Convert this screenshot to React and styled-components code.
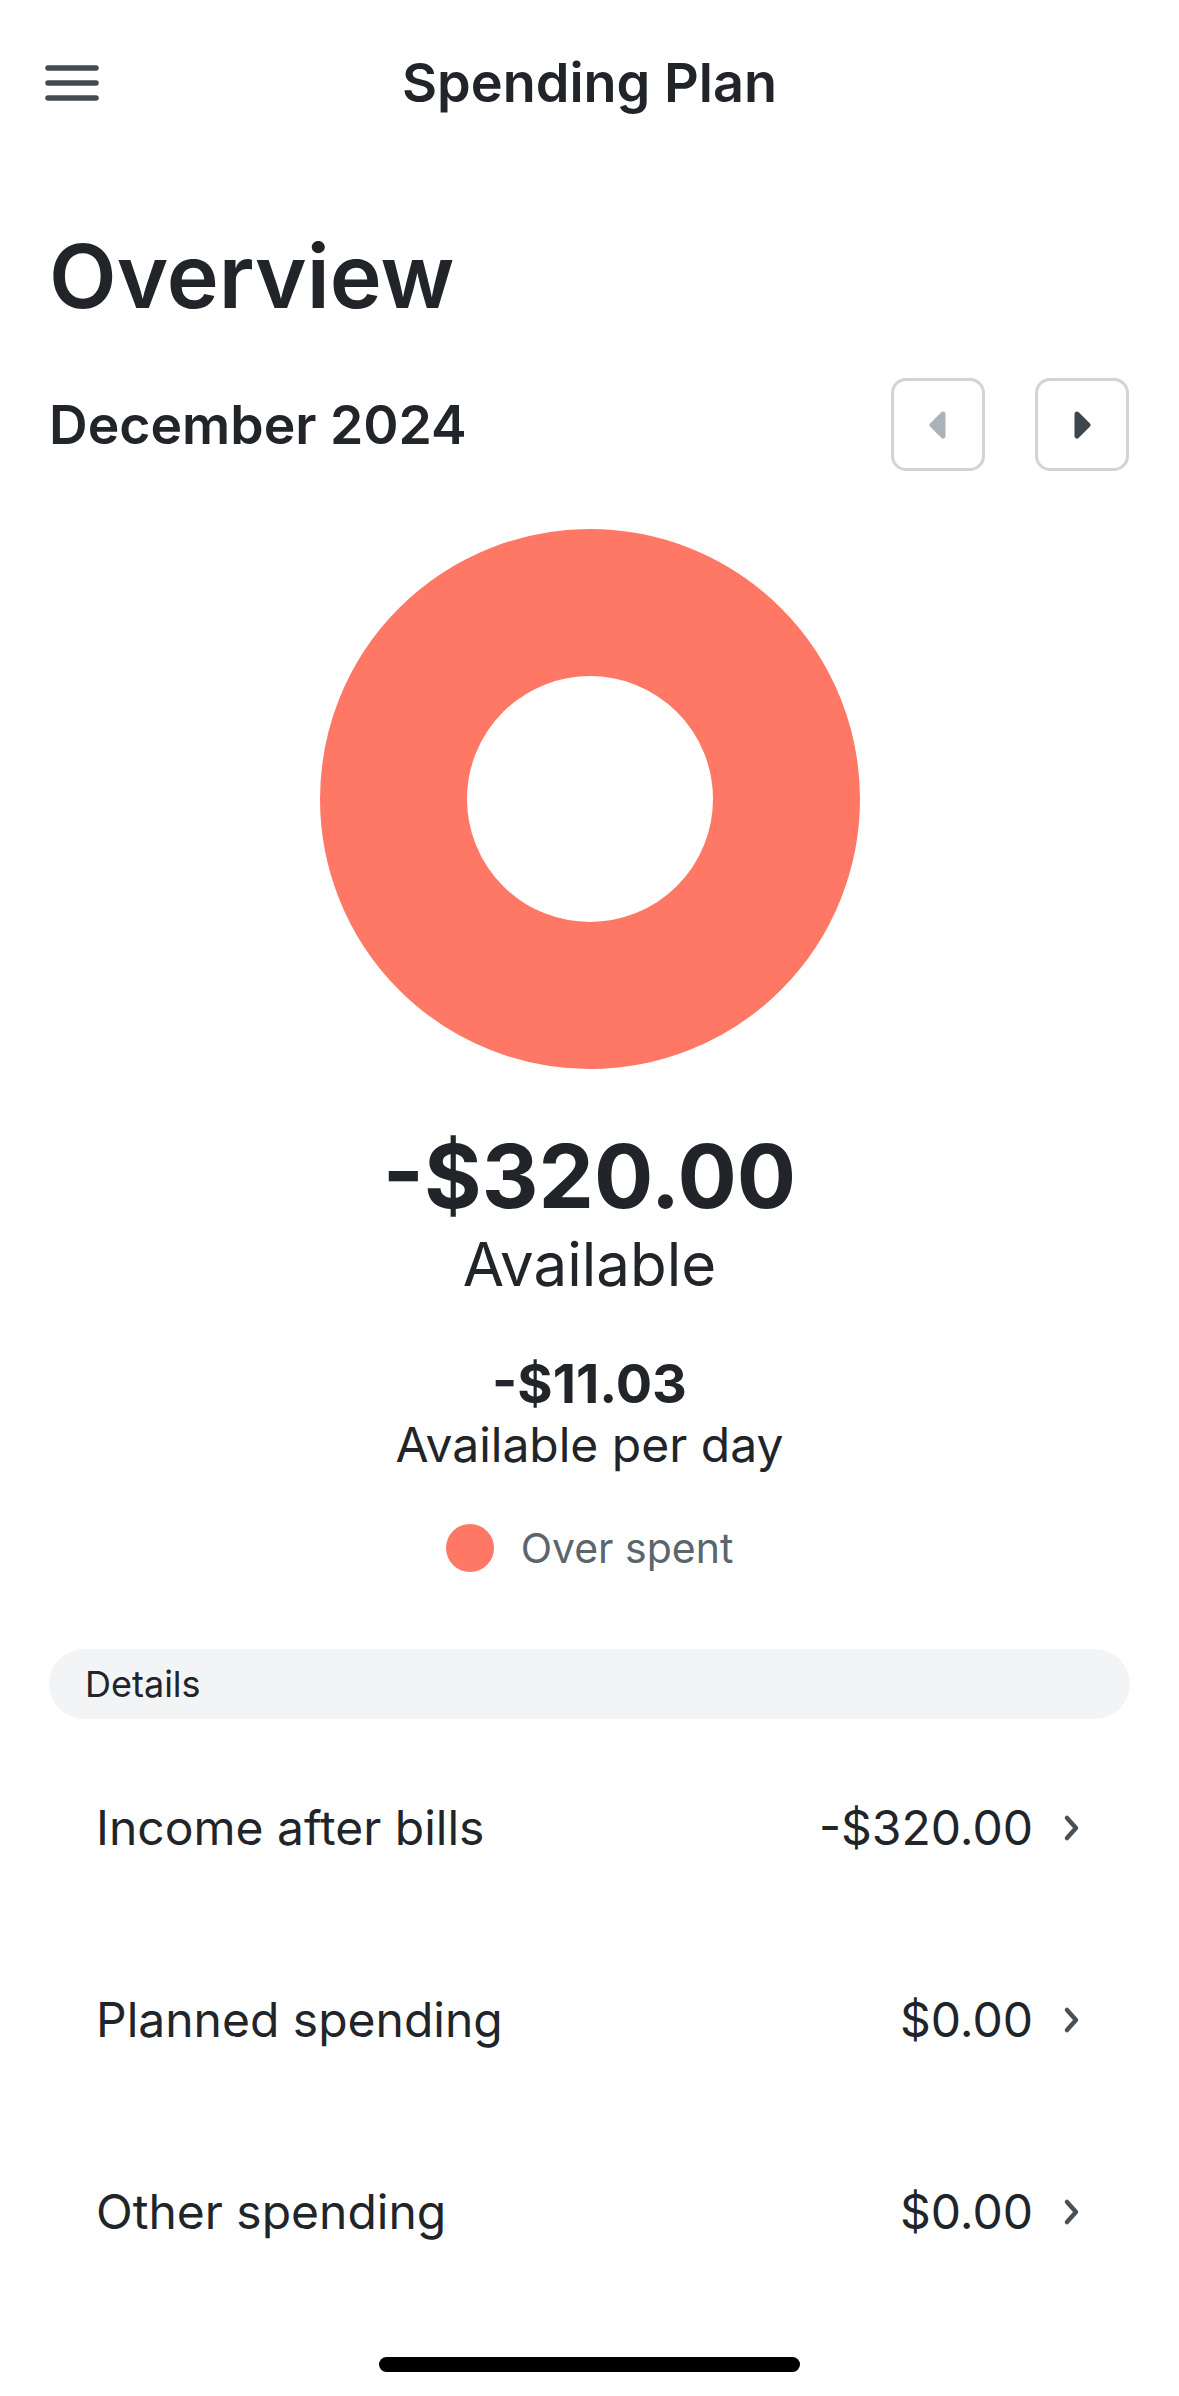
import React from "react";
import styled, { createGlobalStyle } from "styled-components";

const GlobalStyle = createGlobalStyle`
  html, body { margin: 0; padding: 0; background: #ffffff; }
  body { font-family: Inter, "Noto Sans", "Liberation Sans", sans-serif; color: #212529; }
  * { box-sizing: border-box; }
`;

const Page = styled.div`
  width: 1179px;
  min-height: 2396px;
  display: flex;
  flex-direction: column;
  background: #ffffff;
`;

const Header = styled.header`
  height: 165px;
  display: grid;
  grid-template-columns: 1fr auto 1fr;
  align-items: center;
  padding: 0 45px;
`;

const MenuButton = styled.button`
  justify-self: start;
  display: flex;
  align-items: center;
  justify-content: center;
  padding: 0;
  border: 0;
  background: none;
  width: 54px;
  height: 36px;
`;

const Title = styled.h1`
  margin: 0;
  font-size: 54px;
  font-weight: 600;
  line-height: 66px;
  color: #212529;
`;

const Content = styled.main`
  display: flex;
  flex-direction: column;
  padding: 0 49px;
`;

const PageHeading = styled.h2`
  margin: 58px 0 0;
  font-size: 88px;
  font-weight: 600;
  line-height: 106px;
  color: #212529;
`;

const MonthRow = styled.div`
  margin-top: 49px;
  height: 93px;
  display: flex;
  align-items: center;
  justify-content: space-between;
`;

const Month = styled.div`
  font-size: 53.5px;
  font-weight: 600;
  line-height: 62px;
  color: #212529;
`;

const NavGroup = styled.div`
  display: flex;
  gap: 50px;
  padding-right: 1px;
`;

const NavButton = styled.button`
  width: 94px;
  height: 93px;
  border: 3px solid #cfd4d7;
  border-radius: 15px;
  background: #ffffff;
  display: flex;
  align-items: center;
  justify-content: center;
  padding: 0;
`;

const ChartWrap = styled.div`
  margin-top: 57px;
  display: flex;
  justify-content: center;
`;

const Summary = styled.div`
  display: flex;
  flex-direction: column;
  align-items: center;
  text-align: center;
`;

const BigAmount = styled.div`
  margin-top: 54px;
  font-size: 88px;
  font-weight: 700;
  line-height: 104px;
  color: #212529;
`;

const BigLabel = styled.div`
  font-size: 60px;
  font-weight: 400;
  line-height: 72px;
  color: #212529;
`;

const DayAmount = styled.div`
  margin-top: 52px;
  font-size: 54px;
  font-weight: 700;
  line-height: 63px;
  color: #212529;
`;

const DayLabel = styled.div`
  font-size: 48px;
  font-weight: 400;
  line-height: 60px;
  color: #212529;
`;

const Legend = styled.div`
  margin-top: 49px;
  display: flex;
  align-items: center;
  justify-content: center;
  gap: 27px;
`;

const Dot = styled.span`
  width: 48px;
  height: 48px;
  border-radius: 50%;
  background: ${(p) => p.$color};
`;

const LegendText = styled.span`
  font-size: 41px;
  line-height: 48px;
  color: #5b656c;
`;

const SectionBar = styled.div`
  margin-top: 77px;
  height: 70px;
  border-radius: 35px;
  background: #f3f4f6;
  display: flex;
  align-items: center;
  padding-left: 36px;
  font-size: 36px;
  color: #212529;
`;

const List = styled.div`
  margin-top: 13px;
  display: flex;
  flex-direction: column;
`;

const Row = styled.div`
  height: 192px;
  display: flex;
  align-items: center;
  padding: 0 50px 0 47px;
`;

const RowLabel = styled.span`
  flex: 1;
  font-size: 48px;
  line-height: 58px;
  color: #212529;
`;

const RowValue = styled.span`
  font-size: 48px;
  line-height: 58px;
  color: #212529;
  margin-right: 30px;
`;

const HomeIndicator = styled.div`
  margin: 49px auto 0;
  width: 421px;
  height: 15px;
  border-radius: 8px;
  background: #000000;
`;

const MenuIcon = () => (
  <svg width="54" height="36" viewBox="0 0 54 36">
    {[3, 18, 33].map((y) => (
      <line key={y} x1="3" y1={y} x2="51" y2={y} stroke="#434b52" strokeWidth="5.5" strokeLinecap="round" />
    ))}
  </svg>
);

const Caret = ({ dir, color }) => (
  <svg width="18" height="28" viewBox="0 0 18 28">
    <polygon
      points={dir === "left" ? "14,3 3,14 14,25" : "4,3 15,14 4,25"}
      fill={color}
      stroke={color}
      strokeWidth="5"
      strokeLinejoin="round"
    />
  </svg>
);

const Chevron = () => (
  <svg width="17" height="28" viewBox="0 0 17 28">
    <path d="M4 4 L13 14 L4 24" fill="none" stroke="#4a5258" strokeWidth="4.5" strokeLinecap="round" strokeLinejoin="round" />
  </svg>
);

const Donut = ({ color }) => (
  <svg width="542" height="542" viewBox="0 0 542 542">
    <circle cx="271" cy="271" r="196.5" fill="none" stroke={color} strokeWidth="147" />
  </svg>
);

const rows = [
  { label: "Income after bills", value: "-$320.00" },
  { label: "Planned spending", value: "$0.00" },
  { label: "Other spending", value: "$0.00" },
];

export default function App() {
  return (
    <>
      <GlobalStyle />
      <Page>
        <Header>
          <MenuButton aria-label="Menu">
            <MenuIcon />
          </MenuButton>
          <Title>Spending Plan</Title>
          <span />
        </Header>
        <Content>
          <PageHeading>Overview</PageHeading>
          <MonthRow>
            <Month>December 2024</Month>
            <NavGroup>
              <NavButton aria-label="Previous month">
                <Caret dir="left" color="#a9b3b9" />
              </NavButton>
              <NavButton aria-label="Next month">
                <Caret dir="right" color="#3e474e" />
              </NavButton>
            </NavGroup>
          </MonthRow>
          <ChartWrap>
            <Donut color="#ff7765" />
          </ChartWrap>
          <Summary>
            <BigAmount>-$320.00</BigAmount>
            <BigLabel>Available</BigLabel>
            <DayAmount>-$11.03</DayAmount>
            <DayLabel>Available per day</DayLabel>
          </Summary>
          <Legend>
            <Dot $color="#ff7765" />
            <LegendText>Over spent</LegendText>
          </Legend>
          <SectionBar>Details</SectionBar>
          <List>
            {rows.map((r) => (
              <Row key={r.label}>
                <RowLabel>{r.label}</RowLabel>
                <RowValue>{r.value}</RowValue>
                <Chevron />
              </Row>
            ))}
          </List>
        </Content>
        <HomeIndicator />
      </Page>
    </>
  );
}
